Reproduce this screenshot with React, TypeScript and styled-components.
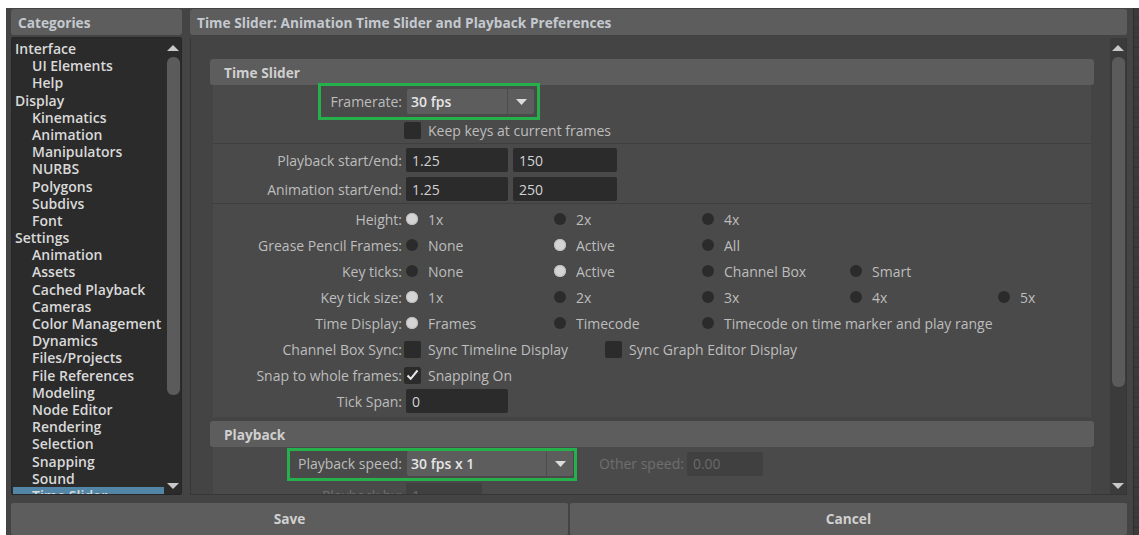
import React from 'react';
import styled, { createGlobalStyle } from 'styled-components';

const GlobalStyle = createGlobalStyle`
    html, body {
        margin: 0;
        background: #ffffff;
    }
    body {
        font-family: "Open Sans", "Liberation Sans", sans-serif;
        font-size: 14px;
        color: #bdbdbd;
    }
`;

const Window = styled.div`
    display: flex;
    margin: 8px 0 0 6px;
    height: 527px;
    background: #444444;
    overflow: hidden;
`;

const Dialog = styled.div`
    flex: 1;
    min-width: 0;
    display: flex;
    flex-direction: column;
    padding: 1px 0 0 5px;
`;

const EdgeStrip = styled.div`
    width: 5px;
    margin-left: 6px;
    border-left: 1px solid #2e2e2e;
    background: repeating-linear-gradient(180deg, #3b3b3b 0 9px, #333 9px 10px);
`;

const Panes = styled.div`
    display: flex;
    gap: 8px;
    height: 486px;
`;

const Sidebar = styled.div`
    width: 171px;
    display: flex;
    flex-direction: column;
    gap: 2px;
`;

const Main = styled.div`
    flex: 1;
    min-width: 0;
    display: flex;
    flex-direction: column;
    gap: 3px;
`;

const PaneHeader = styled.div`
    height: 26px;
    flex-shrink: 0;
    display: flex;
    align-items: center;
    padding-left: 7px;
    background: #5d5d5d;
    border-radius: 3px;
    font-weight: 700;
    font-size: 13.7px;
    color: #c4c9cf;
    white-space: nowrap;
`;

const CategoryList = styled.div`
    flex: 1;
    display: flex;
    background: #2b2b2b;
    border: 1px solid #262626;
    border-radius: 2px;
    overflow: hidden;
`;

const CategoryItems = styled.div`
    flex: 1;
    padding: 2px 1px 0 1px;
    overflow: hidden;
`;

const CategoryItem = styled.div<{ $child?: boolean; $selected?: boolean }>`
    height: 17.2px;
    line-height: 17.2px;
    padding-left: ${p => (p.$child ? 19 : 2)}px;
    font-weight: 600;
    font-size: 14px;
    white-space: nowrap;
    color: #d9d9d9;
    background: ${p => (p.$selected ? '#5285a6' : 'transparent')};
`;

const ScrollBar = styled.div<{ $track: string }>`
    width: 16px;
    flex-shrink: 0;
    display: flex;
    flex-direction: column;
    align-items: center;
    background: ${p => p.$track};
    padding: 7px 0 5px;
    box-sizing: border-box;
`;

const Arrow = styled.div<{ $down?: boolean }>`
    width: 0;
    height: 0;
    border-left: 6px solid transparent;
    border-right: 6px solid transparent;
    ${p => (p.$down ? 'border-top: 6px solid #c8c8c8;' : 'border-bottom: 6px solid #c8c8c8;')}
`;

const Thumb = styled.div<{ $h: number }>`
    width: 13px;
    height: ${p => p.$h}px;
    margin-top: 6px;
    border-radius: 6px;
    background: #5b5b5b;
`;

const Spacer = styled.div`
    flex: 1;
`;

const Frame = styled.div`
    flex: 1;
    display: flex;
    min-height: 0;
    border: 1px solid #363636;
    border-top: none;
`;

const Content = styled.div`
    flex: 1;
    min-width: 0;
    padding: 21px 16px 0 19px;
    overflow: hidden;
`;

const Section = styled.div`
    display: flex;
    flex-direction: column;
    & + & {
        margin-top: 4px;
    }
`;

const SectionHeader = styled.div`
    height: 26px;
    display: flex;
    align-items: center;
    padding-left: 14px;
    background: #5d5d5d;
    border-radius: 3px;
    font-weight: 700;
    font-size: 13.7px;
    color: #cfcfcf;
`;

const SectionBody = styled.div`
    margin: 0 3px;
    background: #4a4a4a;
`;

const Group = styled.div<{ $pt?: number; $pb?: number; $line?: boolean }>`
    padding-top: ${p => p.$pt ?? 0}px;
    padding-bottom: ${p => p.$pb ?? 0}px;
    border-bottom: ${p => (p.$line ? '1px solid #3f3f3f' : 'none')};
`;

const Row = styled.div<{ $h?: number; $mt?: number }>`
    position: relative;
    display: flex;
    align-items: center;
    height: ${p => p.$h ?? 26}px;
    margin-top: ${p => p.$mt ?? 0}px;
`;

const Label = styled.span<{ $dim?: boolean }>`
    width: 189px;
    flex-shrink: 0;
    margin-right: 4px;
    text-align: right;
    white-space: nowrap;
    color: ${p => (p.$dim ? '#6f6f6f' : '#bdbdbd')};
`;

const InlineLabel = styled.span<{ $dim?: boolean }>`
    margin: 0 3px 0 26px;
    white-space: nowrap;
    color: ${p => (p.$dim ? '#6f6f6f' : '#bdbdbd')};
`;

const Highlight = styled.div<{ $left: number; $top: number; $w: number; $h: number }>`
    position: absolute;
    left: ${p => p.$left}px;
    top: ${p => p.$top}px;
    width: ${p => p.$w}px;
    height: ${p => p.$h}px;
    border: 3px solid #26b04b;
    box-sizing: border-box;
    pointer-events: none;
`;

const Select = styled.div<{ $w: number }>`
    display: flex;
    width: ${p => p.$w}px;
    height: 25px;
    margin-left: 1px;
    border-radius: 2px;
    overflow: hidden;
    background: #5d5d5d;
`;

const SelectValue = styled.div`
    flex: 1;
    display: flex;
    align-items: center;
    padding-left: 4px;
    font-weight: 600;
    font-size: 14px;
    color: #e6e6e6;
`;

const SelectButton = styled.div`
    width: 26px;
    display: flex;
    align-items: center;
    justify-content: center;
    border-left: 1px solid #4c4c4c;
`;

const Field = styled.div<{ $w: number; $dim?: boolean }>`
    width: ${p => p.$w}px;
    height: 24px;
    flex-shrink: 0;
    display: flex;
    align-items: center;
    padding-left: 6px;
    box-sizing: border-box;
    border-radius: 2px;
    background: ${p => (p.$dim ? '#404040' : '#2b2b2b')};
    color: ${p => (p.$dim ? '#6a6a6a' : '#d2d2d2')};
    & + & {
        margin-left: 5px;
    }
`;

const Check = styled.span`
    width: 17px;
    height: 17px;
    margin-left: -2px;
    flex-shrink: 0;
    display: inline-flex;
    align-items: center;
    justify-content: center;
    border-radius: 2px;
    background: #2b2b2b;
`;

const CheckText = styled.span<{ $gap?: number }>`
    margin-left: 7px;
    margin-right: ${p => p.$gap ?? 0}px;
    white-space: nowrap;
`;

const RadioOption = styled.span<{ $last?: boolean }>`
    display: inline-flex;
    align-items: center;
    width: ${p => (p.$last ? 'auto' : '148px')};
    flex-shrink: 0;
    white-space: nowrap;
`;

const Dot = styled.span<{ $on?: boolean }>`
    width: 12px;
    height: 12px;
    margin-right: 10px;
    border-radius: 50%;
    background: ${p => (p.$on ? '#d4d4d4' : '#2b2b2b')};
    box-shadow: ${p => (p.$on ? 'inset 0 0 0 1px #bdbdbd' : 'none')};
`;

const ButtonRow = styled.div`
    display: flex;
    gap: 2px;
    margin-top: 8px;
    height: 34px;
`;

const Button = styled.div`
    flex: 1;
    display: flex;
    align-items: center;
    justify-content: center;
    padding-bottom: 2px;
    background: #5d5d5d;
    border-radius: 2px;
    font-weight: 700;
    font-size: 13.7px;
    color: #d0d0d0;
`;

const categories: [string, boolean][] = [
    ['Interface', false],
    ['UI Elements', true],
    ['Help', true],
    ['Display', false],
    ['Kinematics', true],
    ['Animation', true],
    ['Manipulators', true],
    ['NURBS', true],
    ['Polygons', true],
    ['Subdivs', true],
    ['Font', true],
    ['Settings', false],
    ['Animation', true],
    ['Assets', true],
    ['Cached Playback', true],
    ['Cameras', true],
    ['Color Management', true],
    ['Dynamics', true],
    ['Files/Projects', true],
    ['File References', true],
    ['Modeling', true],
    ['Node Editor', true],
    ['Rendering', true],
    ['Selection', true],
    ['Snapping', true],
    ['Sound', true],
    ['Time Slider', true],
];

const radioRows: { label: string; options: string[]; on: number }[] = [
    { label: 'Height:', options: ['1x', '2x', '4x'], on: 0 },
    { label: 'Grease Pencil Frames:', options: ['None', 'Active', 'All'], on: 1 },
    { label: 'Key ticks:', options: ['None', 'Active', 'Channel Box', 'Smart'], on: 1 },
    { label: 'Key tick size:', options: ['1x', '2x', '3x', '4x', '5x'], on: 0 },
    { label: 'Time Display:', options: ['Frames', 'Timecode', 'Timecode on time marker and play range'], on: 0 },
];

const DropArrow = () => (
    <svg width="11" height="6" viewBox="0 0 11 6">
        <path d="M0 0h11L5.5 6z" fill="#dcdcdc" />
    </svg>
);

const Tick = () => (
    <svg width="13" height="12" viewBox="0 0 13 12">
        <path d="M1.5 6.5l3.2 3.3L11.5 1.5" fill="none" stroke="#e8e8e8" strokeWidth="2" />
    </svg>
);

const Scroller = ({ track, thumb }: { track: string; thumb: number }) => (
    <ScrollBar $track={track}>
        <Arrow />
        <Thumb $h={thumb} />
        <Spacer />
        <Arrow $down />
    </ScrollBar>
);

const App = () => {
    return (
        <>
            <GlobalStyle />
            <Window>
                <Dialog>
                    <Panes>
                        <Sidebar>
                            <PaneHeader>Categories</PaneHeader>
                            <CategoryList>
                                <CategoryItems>
                                    {categories.map(([name, child], i) => (
                                        <CategoryItem key={i} $child={child} $selected={name === 'Time Slider'}>
                                            {name}
                                        </CategoryItem>
                                    ))}
                                </CategoryItems>
                                <Scroller track="#2b2b2b" thumb={338} />
                            </CategoryList>
                        </Sidebar>

                        <Main>
                            <PaneHeader>Time Slider: Animation Time Slider and Playback Preferences</PaneHeader>
                            <Frame>
                                <Content>
                                    <Section>
                                        <SectionHeader>Time Slider</SectionHeader>
                                        <SectionBody>
                                            <Group $pt={4} $line>
                                                <Row $h={25}>
                                                    <Highlight $left={105} $top={-6} $w={222} $h={37} />
                                                    <Label>Framerate:</Label>
                                                    <Select $w={127}>
                                                        <SelectValue>30 fps</SelectValue>
                                                        <SelectButton><DropArrow /></SelectButton>
                                                    </Select>
                                                </Row>
                                                <Row $mt={3}>
                                                    <Label />
                                                    <Check />
                                                    <CheckText>Keep keys at current frames</CheckText>
                                                </Row>
                                            </Group>

                                            <Group $pt={4} $pb={2} $line>
                                                <Row $h={24}>
                                                    <Label>Playback start/end:</Label>
                                                    <Field $w={102}>1.25</Field>
                                                    <Field $w={104}>150</Field>
                                                </Row>
                                                <Row $h={24} $mt={5}>
                                                    <Label>Animation start/end:</Label>
                                                    <Field $w={102}>1.25</Field>
                                                    <Field $w={104}>250</Field>
                                                </Row>
                                            </Group>

                                            <Group $pt={2} $pb={3}>
                                                {radioRows.map(r => (
                                                    <Row key={r.label}>
                                                        <Label>{r.label}</Label>
                                                        {r.options.map((o, i) => (
                                                            <RadioOption key={o} $last={i === r.options.length - 1}>
                                                                <Dot $on={i === r.on} />
                                                                {o}
                                                            </RadioOption>
                                                        ))}
                                                    </Row>
                                                ))}
                                                <Row>
                                                    <Label>Channel Box Sync:</Label>
                                                    <Check />
                                                    <CheckText $gap={39}>Sync Timeline Display</CheckText>
                                                    <Check />
                                                    <CheckText>Sync Graph Editor Display</CheckText>
                                                </Row>
                                                <Row>
                                                    <Label>Snap to whole frames:</Label>
                                                    <Check><Tick /></Check>
                                                    <CheckText>Snapping On</CheckText>
                                                </Row>
                                                <Row>
                                                    <Label>Tick Span:</Label>
                                                    <Field $w={102}>0</Field>
                                                </Row>
                                            </Group>
                                        </SectionBody>
                                    </Section>

                                    <Section>
                                        <SectionHeader>Playback</SectionHeader>
                                        <SectionBody>
                                            <Group $pt={4}>
                                                <Row $h={25}>
                                                    <Highlight $left={74} $top={-3} $w={290} $h={33} />
                                                    <Label>Playback speed:</Label>
                                                    <Select $w={166}>
                                                        <SelectValue>30 fps x 1</SelectValue>
                                                        <SelectButton><DropArrow /></SelectButton>
                                                    </Select>
                                                    <InlineLabel $dim>Other speed:</InlineLabel>
                                                    <Field $w={76} $dim>0.00</Field>
                                                </Row>
                                                <Row $h={24} $mt={7}>
                                                    <Label $dim>Playback by:</Label>
                                                    <Field $w={76} $dim>1</Field>
                                                </Row>
                                            </Group>
                                        </SectionBody>
                                    </Section>
                                </Content>
                                <Scroller track="#3b3b3b" thumb={330} />
                            </Frame>
                        </Main>
                    </Panes>

                    <ButtonRow>
                        <Button>Save</Button>
                        <Button>Cancel</Button>
                    </ButtonRow>
                </Dialog>
                <EdgeStrip />
            </Window>
        </>
    );
};

export default App;
